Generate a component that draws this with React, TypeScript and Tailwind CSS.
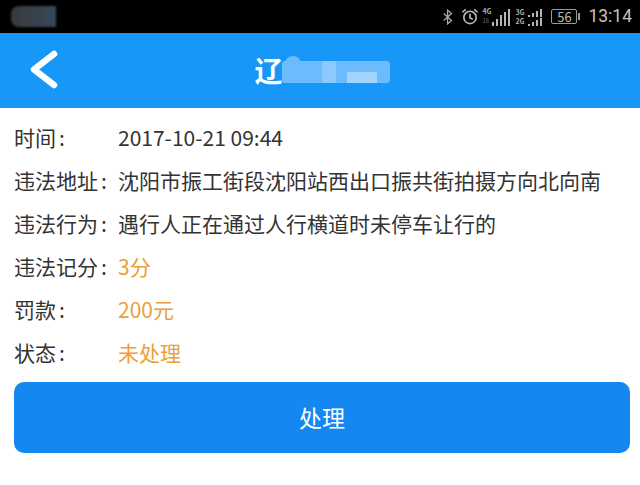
const font = { fontFamily: '"Noto Sans CJK SC", "Liberation Sans", sans-serif' };

function Row({ label, value, orange }: { label: string; value: string; orange?: boolean }) {
  return (
    <div className="flex h-[43px] items-center pb-[3px] text-[21px] leading-none text-[#333333]">
      <div className="w-[104px] shrink-0 whitespace-nowrap">
        {label}
        <span className="ml-[3px]">:</span>
      </div>
      <div className={orange ? "whitespace-nowrap text-[#eba037]" : "whitespace-nowrap"}>{value}</div>
    </div>
  );
}

function StatusIcons() {
  return (
    <div className="flex items-center gap-[3px]">
      <svg width="12" height="18" viewBox="0 0 14 18" fill="none" stroke="#aaaaaa" strokeWidth="1.500">
        <path d="M2 5l9 8-4.500 4V1L11 5l-9 8" />
      </svg>
      <svg className="ml-[4px]" width="18" height="19" viewBox="0 0 19 19" fill="none" stroke="#bbbbbb" strokeWidth="1.700">
        <circle cx="9.500" cy="10.500" r="6.500" />
        <path d="M9.500 6.500v4.500l3 1.500M1.500 5l3.500-3M17.500 5l-3.500-3" />
      </svg>
      <div className="relative h-[20px] w-[28px]">
        <span className="absolute left-0 top-[1px] text-[7px] font-bold leading-none text-[#aaaaaa]">4G</span>
        <span className="absolute left-0 top-[11px] text-[6px] leading-none text-[#666666]">16</span>
        <svg className="absolute left-[9px] top-0" width="19" height="20" viewBox="0 0 19 20" fill="#b5b5b5">
          <rect x="1" y="15" width="2" height="4" />
          <rect x="5" y="12" width="2" height="7" />
          <rect x="9" y="8" width="2" height="11" />
          <rect x="13" y="5" width="2" height="14" />
          <rect x="17" y="2" width="2" height="17" />
        </svg>
      </div>
      <div className="relative ml-[2px] h-[20px] w-[29px]">
        <span className="absolute left-0 top-[2px] text-[7px] font-bold leading-none text-[#aaaaaa]">3G</span>
        <span className="absolute left-0 top-[11px] text-[7px] font-bold leading-none text-[#aaaaaa]">2G</span>
        <svg className="absolute left-[12px] top-0" width="18" height="20" viewBox="0 0 18 20" fill="#b5b5b5">
          <rect x="1" y="8" width="2" height="2" />
          <rect x="5" y="6" width="2" height="4" />
          <rect x="9" y="4" width="2" height="6" />
          <rect x="13" y="2" width="2" height="8" />
          <rect x="1" y="17" width="2" height="2" />
          <rect x="5" y="15" width="2" height="4" />
          <rect x="9" y="13" width="2" height="6" />
          <rect x="13" y="11" width="2" height="8" />
        </svg>
      </div>
      <div className="ml-[4px] flex items-center">
        <div className="flex h-[15px] w-[26px] items-center justify-center rounded-[2px] border border-[#999999] text-[13px] leading-none text-[#bbbbbb]">
          56
        </div>
        <div className="ml-[1px] h-[7px] w-[2px] bg-[#999999]" />
      </div>
      <span className="ml-[5px] text-[17.500px] leading-none text-[#c4c4c4]" style={{ fontFamily: '"Roboto", sans-serif' }}>
        13:14
      </span>
    </div>
  );
}

export default function App() {
  return (
    <div className="h-[485px] w-[640px] overflow-hidden bg-white" style={font}>
      <div className="flex h-[33px] items-center justify-between bg-black pl-[11px] pr-[8px]">
        <div className="h-[21px] w-[45px] rounded-l-[8px] bg-gradient-to-r from-[#3a3a3a] to-[#34495a] blur-[1px]" />
        <StatusIcons />
      </div>
      <div className="relative flex h-[75px] items-center justify-center bg-[#1797f8]">
        <svg className="absolute left-[29px] top-[17px]" width="30" height="40" viewBox="0 0 30 40" fill="none" stroke="white" strokeWidth="6.500" strokeLinecap="round" strokeLinejoin="round">
          <path d="M25 4L5 19.500 25 35" />
        </svg>
        <div className="mb-[2px] ml-[4px] flex items-center">
          <span className="text-[28px] font-bold leading-none text-white">辽</span>
          <div className="relative -ml-[1px] h-[27px] w-[108px]">
            <div className="absolute left-0 top-[5px] h-[22px] w-[108px] rounded-[3px] bg-[#6cbcfd]" />
            <div className="absolute left-[3px] top-0 h-[16px] w-[16px] rounded-full bg-[#6cbcfd]" />
            <div className="absolute left-[40px] top-[5px] h-[22px] w-[14px] bg-[#8cc9fe]" />
            <div className="absolute left-[65px] top-[16px] h-[11px] w-[30px] bg-[#a2d4fe]" />
          </div>
        </div>
      </div>
      <div className="px-[14px] pt-[9px]">
        <Row label="时间" value="2017-10-21 09:44" />
        <Row label="违法地址" value="沈阳市振工街段沈阳站西出口振共街拍摄方向北向南" />
        <Row label="违法行为" value="遇行人正在通过人行横道时未停车让行的" />
        <Row label="违法记分" value="3分" orange />
        <Row label="罚款" value="200元" orange />
        <Row label="状态" value="未处理" orange />
        <button className="mt-[7px] flex h-[71px] w-[616px] items-center justify-center rounded-[10px] bg-[#1487f0] text-[23px] leading-none text-white">
          处理
        </button>
      </div>
    </div>
  );
}
